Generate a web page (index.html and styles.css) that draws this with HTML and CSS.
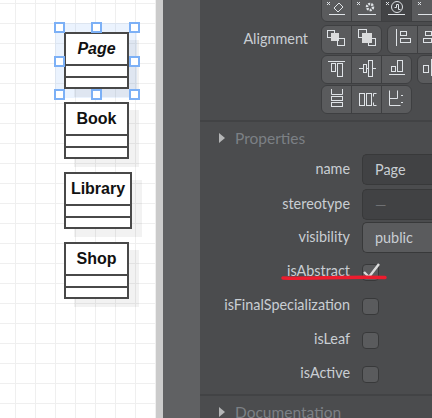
FILE: index.html
```html
<!DOCTYPE html>
<html lang="en">
<head>
<meta charset="utf-8">
<title>Class properties</title>
<link rel="stylesheet" href="styles.css">
</head>
<body>
<div class="app">
  <main class="canvas">
    <div class="selection"></div>
    <div class="node node-page">
      <div class="node-name abstract">Page</div>
      <div class="node-comp"></div>
      <div class="node-comp"></div>
    </div>
    <div class="node node-book">
      <div class="node-name">Book</div>
      <div class="node-comp"></div>
      <div class="node-comp"></div>
    </div>
    <div class="node node-library">
      <div class="node-name">Library</div>
      <div class="node-comp"></div>
      <div class="node-comp"></div>
    </div>
    <div class="node node-shop">
      <div class="node-name">Shop</div>
      <div class="node-comp"></div>
      <div class="node-comp"></div>
    </div>
    <span class="handle h-tl"></span><span class="handle h-tc"></span><span class="handle h-tr"></span>
    <span class="handle h-ml"></span><span class="handle h-mr"></span>
    <span class="handle h-bl"></span><span class="handle h-bc"></span><span class="handle h-br"></span>
  </main>
  <div class="gutter"></div>
  <div class="rail"></div>
  <aside class="panel">
    <section class="format">
      <div class="tool-row tool-row-top">
        <div class="group group-open-top">
          <button class="btn"><svg viewBox="0 0 29 27" class="ico"><path d="M5 8l3 3m0-3l-3 3M7 20.500h16"/><path d="M12 14l5-5 4 4-5 5z"/></svg></button>
          <button class="btn"><svg viewBox="0 0 29 27" class="ico"><path d="M5 8l3 3m0-3l-3 3M6 20.500h18"/><circle cx="18" cy="13" r="3" class="thick"/></svg></button>
          <button class="btn btn-on"><svg viewBox="0 0 29 27" class="ico"><path d="M4 8l3 3m0-3l-3 3M6 20.500h17"/><circle cx="15" cy="13" r="5.500"/><path d="M12.500 13.500h2v-3h2v5h2"/></svg></button>
          <button class="btn"><svg viewBox="0 0 29 27" class="ico"><path d="M6 8l3 3m0-3l-3 3M6 20.500h18"/></svg></button>
        </div>
      </div>
      <div class="align-block">
        <div class="side-label">Alignment</div>
        <div class="tool-rows">
          <div class="tool-row">
            <div class="group">
              <button class="btn"><svg viewBox="0 0 29 27" class="ico"><rect x="5.500" y="4.500" width="7" height="7"/><rect x="9" y="7" width="8" height="8" class="solid"/><rect x="15.500" y="12.500" width="7" height="7"/></svg></button>
              <button class="btn"><svg viewBox="0 0 29 27" class="ico"><rect x="6.500" y="3.500" width="8" height="8"/><rect x="16.500" y="12.500" width="7" height="7"/><rect x="10" y="7" width="10" height="10" class="solid"/></svg></button>
            </div>
            <div class="group">
              <button class="btn"><svg viewBox="0 0 29 27" class="ico"><path d="M8.500 3v17"/><rect x="12.500" y="5.500" width="6" height="4"/><rect x="12.500" y="12.500" width="10" height="4"/></svg></button>
              <button class="btn"><svg viewBox="0 0 29 27" class="ico"><path d="M14.500 3v17"/><rect x="7.500" y="5.500" width="6" height="4"/><rect x="5.500" y="12.500" width="8" height="4"/></svg></button>
            </div>
          </div>
          <div class="tool-row">
            <div class="group">
              <button class="btn"><svg viewBox="0 0 29 27" class="ico"><path d="M6 5.500h17"/><rect x="9.500" y="7.500" width="4" height="8"/><rect x="15.500" y="7.500" width="5" height="13"/></svg></button>
              <button class="btn"><svg viewBox="0 0 29 27" class="ico"><path d="M7 12.500h17"/><rect x="11.500" y="8.500" width="3" height="8" class="bg"/><rect x="16.500" y="4.500" width="4" height="16" class="bg"/></svg></button>
              <button class="btn"><svg viewBox="0 0 29 27" class="ico"><path d="M7 18.500h16"/><rect x="9.500" y="10.500" width="4" height="5"/><rect x="15.500" y="4.500" width="5" height="11"/></svg></button>
            </div>
            <div class="group">
              <button class="btn"><svg viewBox="0 0 29 27" class="ico"><rect x="5.500" y="9.500" width="5" height="7"/><path d="M13.500 3v17"/></svg></button>
            </div>
          </div>
          <div class="tool-row">
            <div class="group">
              <button class="btn"><svg viewBox="0 0 29 27" class="ico"><path d="M9.500 3v5.500h11V3"/><rect x="9.500" y="10.500" width="11" height="4"/><rect x="9.500" y="16.500" width="11" height="4" class="bg"/></svg></button>
              <button class="btn"><svg viewBox="0 0 29 27" class="ico"><rect x="7.500" y="7.500" width="5" height="12"/><rect x="14.500" y="7.500" width="5" height="12"/><path d="M21.500 7.500h3M21.500 19.500h3M21.500 7.500v3M21.500 16.500v3"/></svg></button>
              <button class="btn"><svg viewBox="0 0 29 27" class="ico"><path d="M7.500 4.500v15h11M7.500 12.500h8M15.500 4.500v8M19 9.500h2M19 16.500h2"/></svg></button>
            </div>
          </div>
        </div>
      </div>
    </section>
    <section class="props">
      <h2 class="section-head"><span class="caret"></span>Properties</h2>
      <div class="prop-row prop-field">
        <label class="prop-label">name</label>
        <div class="field">Page</div>
      </div>
      <div class="prop-row prop-field prop-stereotype">
        <label class="prop-label">stereotype</label>
        <div class="field field-empty">—</div>
      </div>
      <div class="prop-row prop-field prop-visibility">
        <label class="prop-label">visibility</label>
        <div class="field field-select">public</div>
      </div>
      <div class="prop-row prop-check prop-abstract">
        <label class="prop-label">isAbstract</label>
        <div class="check"><svg viewBox="0 0 16 16" class="tick"><path d="M1 7l5 5L16-1"/></svg></div>
        <svg class="scribble" viewBox="0 0 106 5"><path d="M2 3C30 4 60 1.500 104 2.500"/></svg>
      </div>
      <div class="prop-row prop-check">
        <label class="prop-label">isFinalSpecialization</label>
        <div class="check"></div>
      </div>
      <div class="prop-row prop-check">
        <label class="prop-label">isLeaf</label>
        <div class="check"></div>
      </div>
      <div class="prop-row prop-check">
        <label class="prop-label">isActive</label>
        <div class="check"></div>
      </div>
    </section>
    <section class="docs">
      <h2 class="section-head"><span class="caret"></span>Documentation</h2>
    </section>
  </aside>
</div>
</body>
</html>
```
FILE: styles.css
```css
* { box-sizing: border-box; }
html, body { margin: 0; height: 100%; overflow: hidden; }
body { font-family: "Lato", "Open Sans", sans-serif; }

.app { display: flex; width: 432px; height: 418px; overflow: hidden; }

/* Diagram canvas */
.canvas {
  position: relative;
  flex: 0 0 156px;
  background-color: #fff;
  background-image:
    linear-gradient(#efefef 1px, transparent 1px),
    linear-gradient(90deg, #efefef 1px, transparent 1px);
  background-size: 20px 20px;
  background-position: -5px 3px;
}
.node {
  position: absolute;
  left: 64px;
  width: 65px;
  height: 57px;
  display: flex;
  flex-direction: column;
  background: #fff;
  border: 2px solid #484848;
  box-shadow: 10px 8px 0 rgba(0, 0, 0, 0.05);
  color: #111;
  font-family: "Liberation Sans", Arial, sans-serif;
}
.node-page { top: 32px; }
.node-book { top: 102px; }
.node-library { top: 172px; width: 68px; }
.node-shop { top: 242px; }
.node-name {
  flex: none;
  height: 30px;
  font-size: 16px;
  font-weight: 700;
  line-height: 29px;
  text-align: center;
}
.abstract { font-style: italic; }
.node-comp { flex: 1; border-top: 2px solid #484848; }

.selection {
  position: absolute;
  left: 55px;
  top: 23px;
  width: 82px;
  height: 75px;
  background: rgba(120, 173, 245, 0.15);
}
.handle {
  position: absolute;
  width: 11px;
  height: 11px;
  background: #fff;
  border: 2px solid #7cb0f6;
}
.h-tl, .h-ml, .h-bl { left: 54px; }
.h-tc, .h-bc { left: 91px; }
.h-tr, .h-mr, .h-br { left: 129px; }
.h-tl, .h-tc, .h-tr { top: 22px; }
.h-ml, .h-mr { top: 56px; }
.h-bl, .h-bc, .h-br { top: 89px; }

.gutter { flex: 0 0 7px; background: #cbcbcb; }
.rail { flex: 0 0 37px; background: #606163; }

/* Properties panel */
.panel {
  flex: 1;
  min-width: 0;
  background: #4b4c4e;
  color: #c9ced3;
  font-size: 14.4px;
  overflow: hidden;
}
.format {
  height: 122px;
  padding-left: 121px;
  border-bottom: 2px solid #424345;
  overflow: hidden;
}
.tool-row { display: flex; gap: 5px; height: 29px; }
.tool-row-top { margin-top: -7px; margin-bottom: 3px; }
.tool-rows { display: flex; flex-direction: column; gap: 1px; }
.align-block { position: relative; }
.side-label {
  position: absolute;
  right: 100%;
  top: 5px;
  margin-right: 13px;
  white-space: nowrap;
  line-height: 18px;
}
.group { display: flex; flex: none; }
.btn {
  flex: none;
  width: 31px;
  height: 29px;
  margin: 0 0 0 -1px;
  padding: 0;
  background: #5a5b5d;
  border: 1px solid #3e3f41;
}
.btn:first-child { margin-left: 0; border-radius: 6px 0 0 6px; }
.btn:last-child { border-radius: 0 6px 6px 0; }
.btn:only-child { border-radius: 6px; }
.group-open-top .btn:first-child { border-radius: 0 0 0 6px; }
.group-open-top .btn:last-child { border-radius: 0; }
.btn-on { background: #434446; }
.ico {
  display: block;
  width: 29px;
  height: 27px;
  fill: none;
  stroke: #dfe3e7;
  stroke-width: 1;
}
.ico .solid { fill: #dadbdc; stroke: none; }
.ico .bg { fill: #5a5b5d; }
.ico .thick { stroke-width: 2.500; stroke-dasharray: 2 1; }

.section-head {
  display: flex;
  align-items: center;
  margin: 0;
  padding-left: 19px;
  height: 32px;
  font-size: 15.500px;
  font-weight: 400;
  color: #7c8085;
}
.caret {
  flex: none;
  width: 0;
  height: 0;
  margin-right: 10px;
  border-left: 6px solid #b5b6b7;
  border-top: 5px solid transparent;
  border-bottom: 5px solid transparent;
}
.props { height: 274px; border-bottom: 2px solid #424345; }
.prop-row {
  position: relative;
  display: grid;
  grid-template-columns: 150px 1fr;
  column-gap: 12px;
  align-items: center;
}
.prop-label { text-align: right; white-space: nowrap; padding-bottom: 3px; }
.prop-field { height: 29px; margin-bottom: 6px; }
.prop-stereotype { margin-bottom: 4px; }
.prop-visibility { height: 30px; margin-bottom: 10px; }
.prop-check { height: 17px; margin-bottom: 17px; }
.field {
  width: 90px;
  height: 100%;
  padding-left: 12px;
  line-height: 29px;
  background: #414244;
  border: 1px solid #38393a;
  border-right: 0;
  border-radius: 5px 0 0 5px;
}
.field-empty { color: #6f7174; }
.field-select { background: #5a5b5d; }
.check {
  width: 17px;
  height: 17px;
  background: #5a5b5d;
  border: 1px solid #38393a;
  border-radius: 4px;
}
.tick {
  display: block;
  width: 16px;
  height: 16px;
  overflow: visible;
  fill: none;
  stroke: #dcdcdc;
  stroke-width: 2.400;
}
.scribble {
  position: absolute;
  left: 81px;
  top: 13px;
  width: 106px;
  height: 5px;
  fill: none;
  stroke: #ed1c2e;
  stroke-width: 3.500;
  stroke-linecap: round;
}
```
